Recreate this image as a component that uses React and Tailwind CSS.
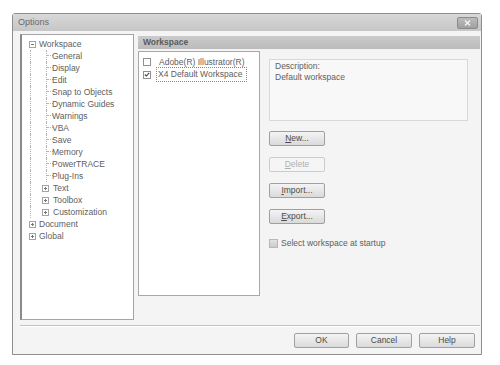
import React from 'react';

const font = { fontFamily: '"Liberation Sans", Arial, sans-serif' };

function ExpandBox({ open }) {
  return (
    <div className="relative flex h-[7px] w-[7px] items-center justify-center border border-[#a4a4a4] bg-white">
      <div className="h-px w-[3px] bg-[#777]" />
      {!open && <div className="absolute h-[3px] w-px bg-[#777]" />}
    </div>
  );
}

// vertical dotted guide with an optional branch to the right
function Guide({ width, offset, branch }) {
  return (
    <div className={`flex h-full shrink-0 ${width}`}>
      <div className={`h-full shrink-0 ${offset}`} />
      <div className="flex h-full flex-col border-l border-dotted border-[#b4b4b4]">
        {branch && <div className="h-[6px] w-[6px] border-b border-dotted border-[#b4b4b4]" />}
      </div>
    </div>
  );
}

const children = ['General', 'Display', 'Edit', 'Snap to Objects', 'Dynamic Guides', 'Warnings', 'VBA', 'Save', 'Memory', 'PowerTRACE', 'Plug-Ins'];
const subFolders = ['Text', 'Toolbox', 'Customization'];

function Tree() {
  return (
    <div className="flex h-[286px] w-[114px] shrink-0 flex-col border border-[#a4a4a4] border-l-2 border-l-[#8a8a8a] bg-white pt-[3px] text-[8.5px] text-[#606060]">
      <div className="flex h-[12px] items-center">
        <div className="flex w-[16px] shrink-0 justify-end pr-[2px]"><ExpandBox open /></div>
        <span className="ml-[1px]">Workspace</span>
      </div>
      {children.map((c) => (
        <div key={c} className="flex h-[12px] items-center">
          <Guide width="w-[16px]" offset="w-[8px]" />
          <Guide width="w-[14px]" offset="w-[8px]" branch />
          <span>{c}</span>
        </div>
      ))}
      {subFolders.map((c) => (
        <div key={c} className="flex h-[12px] items-center">
          <Guide width="w-[16px]" offset="w-[8px]" />
          <div className="flex h-full w-[15px] shrink-0 items-center pl-[4px]">
            <ExpandBox />
          </div>
          <span>{c}</span>
        </div>
      ))}
      {['Document', 'Global'].map((c) => (
        <div key={c} className="flex h-[12px] items-center">
          <div className="flex w-[16px] shrink-0 justify-end pr-[2px]"><ExpandBox /></div>
          <span className="ml-[1px]">{c}</span>
        </div>
      ))}
    </div>
  );
}

function Check({ checked }) {
  return (
    <div className="flex h-[8px] w-[8px] shrink-0 items-center justify-center border border-[#909090] bg-white">
      {checked && (
        <svg width="7" height="7" viewBox="0 0 7 7">
          <path d="M1 3.5 L2.8 5.3 L6 1.5" fill="none" stroke="#444" strokeWidth="1.3" />
        </svg>
      )}
    </div>
  );
}

function Btn({ children, disabled, w = 'w-[56px]' }) {
  return (
    <div
      className={`flex h-[15px] ${w} items-center justify-center rounded-[2px] border text-[8.5px] ${
        disabled
          ? 'border-[#cccccc] bg-[#f5f5f5] text-[#b0b0b0]'
          : 'border-[#a0a0a0] bg-gradient-to-b from-[#f4f4f4] to-[#dadada] text-[#4a4a4a]'
      }`}
    >
      {children}
    </div>
  );
}

export default function App() {
  return (
    <div className="h-[365px] w-[500px] bg-white pl-[12px] pt-[13px]" style={font}>
      <div className="flex h-[342px] w-[470px] flex-col rounded-t-[3px] border border-[#8e8e8e] bg-[#f4f4f4]">
        <div className="flex h-[17px] shrink-0 items-center justify-between bg-gradient-to-b from-[#d8d8d8] to-[#c6c6c6] pl-[5px] pr-[3px]">
          <span className="text-[9px] text-[#6a6a6a]">Options</span>
          <div className="flex h-[12px] w-[21px] items-center justify-center rounded-[2px] border border-[#8a8a8a] bg-gradient-to-b from-[#bcbcbc] to-[#a0a0a0]">
            <svg width="7" height="6" viewBox="0 0 7 6">
              <path d="M1 0.5 L6 5.5 M6 0.5 L1 5.5" stroke="#f4f4f4" strokeWidth="1.4" />
            </svg>
          </div>
        </div>

        <div className="flex pl-[7px] pr-[1px] pt-[3px]">
          <Tree />
          <div className="ml-[4px] flex flex-1 flex-col">
            <div className="mt-[2px] flex h-[13px] items-center bg-gradient-to-b from-[#cbcbcb] to-[#bbbbbb] pl-[5px] text-[8.5px] font-bold text-[#5a5a5a]">
              Workspace
            </div>
            <div className="flex">
              <div className="mt-[2px] flex h-[245px] w-[122px] shrink-0 flex-col border border-[#a8a8a8] bg-white pl-[4px] pt-[4px] text-[8.5px] text-[#606060]">
                <div className="flex h-[12px] items-center gap-[8px]">
                  <Check />
                  <span>Adobe(R) Illustrator(R)</span>
                </div>
                <div className="flex h-[13px] items-center gap-[5px]">
                  <Check checked />
                  <span className="border border-dotted border-[#888] pl-[1px] pr-[4px]">X4 Default Workspace</span>
                </div>
              </div>
              <div className="ml-[9px] flex w-[199px] flex-col">
                <div className="mt-[10px] h-[62px] border border-[#d8d8d8] bg-[#f8f8f8] px-[5px] pt-[1px] text-[8.5px] leading-[11px] text-[#606060]">
                  <div>Description:</div>
                  <div>Default workspace</div>
                </div>
                <div className="mt-[10px] flex flex-col gap-[11px]">
                  <Btn><span><span className="underline">N</span>ew...</span></Btn>
                  <Btn disabled><span><span className="underline">D</span>elete</span></Btn>
                  <Btn><span><span className="underline">I</span>mport...</span></Btn>
                  <Btn><span><span className="underline">E</span>xport...</span></Btn>
                </div>
                <div className="mt-[13px] flex items-center gap-[3px] text-[8.5px] text-[#606060]">
                  <div className="h-[9px] w-[9px] border border-[#b8b8b8] bg-gradient-to-b from-[#e2e2e2] to-[#cacaca]" />
                  <span>Select workspace at startup</span>
                </div>
              </div>
            </div>
          </div>
        </div>

        <div className="ml-[7px] mr-[1px] mt-[5px] h-[2px] border-t border-[#c2c2c2] border-b border-b-white" />

        <div className="mt-[6px] flex justify-end gap-[7px] pr-[6px]">
          <Btn w="w-[55px]">OK</Btn>
          <Btn w="w-[56px]">Cancel</Btn>
          <Btn w="w-[56px]">Help</Btn>
        </div>
      </div>
    </div>
  );
}
